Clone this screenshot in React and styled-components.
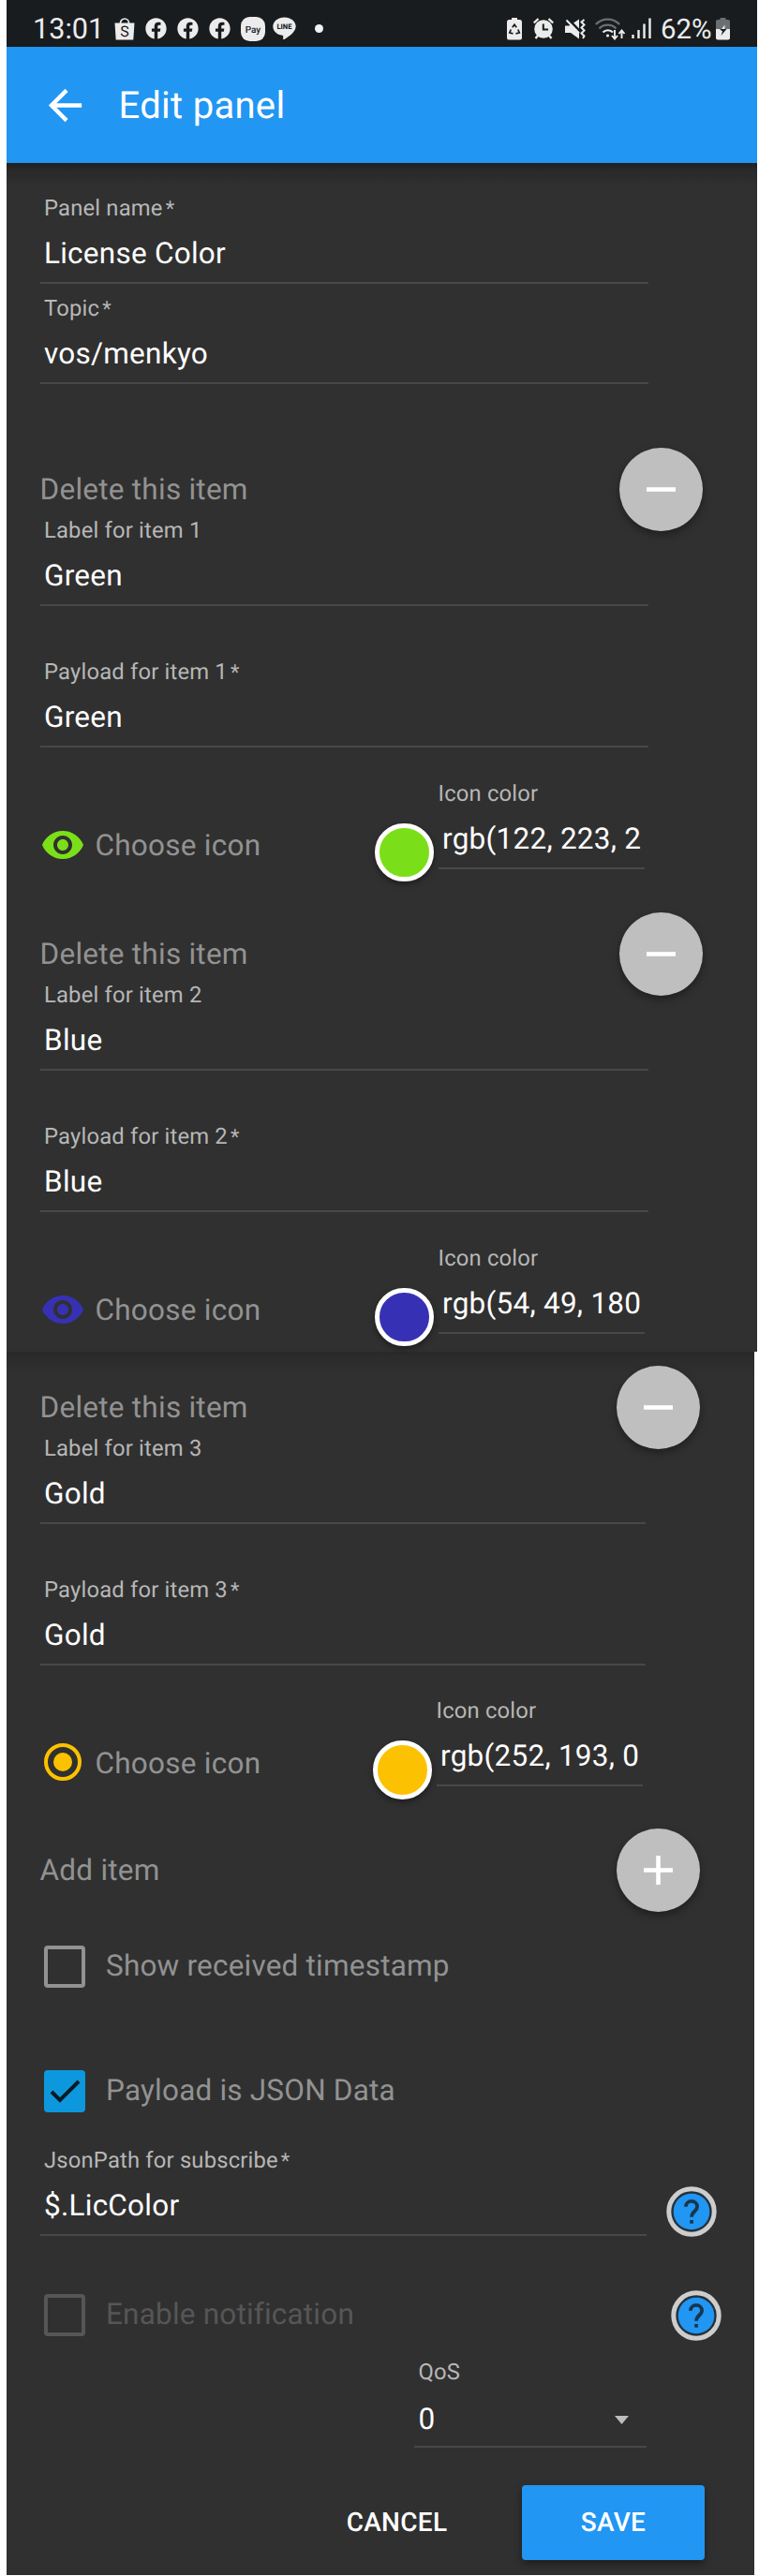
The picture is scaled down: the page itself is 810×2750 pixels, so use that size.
import React from "react";
import styled, { createGlobalStyle } from "styled-components";
import { FaFacebook } from "react-icons/fa";

const GlobalStyle = createGlobalStyle`
  *, *::before, *::after { box-sizing: border-box; }
  html, body { margin: 0; background: #ffffff; }
  body {
    font-family: Roboto, "Liberation Sans", sans-serif;
    font-size: 31.5px;
    letter-spacing: 0.25px;
    text-rendering: geometricPrecision;
    color: #ffffff;
  }
`;

const Screen = styled.div`
  width: 810px;
  height: 2750px;
  padding: 0 2px 0 7px;
  overflow: hidden;
`;

const StatusBar = styled.div`
  display: flex;
  align-items: center;
  justify-content: space-between;
  height: 50px;
  padding: 11px 29px 0 28px;
  background: #181c1f;
  color: #ececec;
  line-height: 36px;
`;

const StatusGroup = styled.div`
  display: flex;
  align-items: center;
  gap: ${(p) => p.$gap}px;
`;

const Clock = styled.span`
  font-size: 30.6px;
  letter-spacing: 0;
  width: 76px;
  padding-top: 2px;
`;

const Percent = styled.span`
  width: 52px;
  margin: 0 -5px 0 -2px;
  padding-top: 2px;
  font-size: 29.4px;
  letter-spacing: 0;
`;

const MoreDot = styled.span`
  width: 9px;
  height: 9px;
  margin-left: 9px;
  border-radius: 50%;
  background: #f2f2f2;
`;

const AppBar = styled.header`
  display: flex;
  align-items: center;
  gap: 30.5px;
  height: 124px;
  padding-left: 36px;
  background: #2196f3;
  font-size: 40px;
  letter-spacing: 0.3px;
`;

const Panel = styled.main`
  height: ${(p) => p.$height}px;
  margin-right: ${(p) => p.$inset}px;
  padding: ${(p) => p.$top}px 0 0 35.5px;
  background: linear-gradient(
      ${(p) => (p.$deep ? "#202020" : "#292929")} 0,
      ${(p) => (p.$deep ? "#292929" : "#2c2c2c")} 8px,
      #303030 24px
    );
`;

const FieldBox = styled.div`
  width: ${(p) => p.$width || "auto"};
  margin: ${(p) => p.$margin || 0};
  border-bottom: 2px solid #484848;
`;

const FieldLabel = styled.div`
  height: 28px;
  padding-left: ${(p) => (p.$flush ? 0 : 4.5)}px;
  font-size: 23.8px;
  letter-spacing: 0.18px;
  line-height: 28px;
  color: #b7b7b7;
  white-space: nowrap;
`;

const Required = styled.span`
  margin-left: 3px;
  font-size: 22px;
`;

const FieldValue = styled.div`
  display: flex;
  align-items: center;
  justify-content: space-between;
  height: 36px;
  margin: ${(p) => (p.$select ? "19px 0 10px" : "17px 0 12px")};
  padding: 0 ${(p) => (p.$select ? 19 : 0)}px 0 4.5px;
  line-height: 36px;
  white-space: nowrap;
`;

const Item = styled.section`
  height: ${(p) => p.$height}px;
`;

const ActionRow = styled.div`
  display: flex;
  align-items: center;
  justify-content: space-between;
  height: 89px;
  padding-right: 58px;
  color: #929292;
`;

const RoundButton = styled.button`
  display: grid;
  place-items: center;
  width: 89px;
  height: 89px;
  padding: 0;
  border: 0;
  border-radius: 50%;
  background: #bfbfbf;
  box-shadow: 0 4px 9px rgba(0, 0, 0, 0.36);
`;

const IconRow = styled.div`
  display: flex;
  align-items: flex-start;
  justify-content: space-between;
  margin-top: 34.7px;
  padding-right: ${(p) => p.$right}px;
`;

const ChooseIcon = styled.div`
  display: flex;
  align-items: center;
  gap: 11px;
  height: 48px;
  margin-top: 45px;
  color: #929292;
`;

const ChooseText = styled.span`
  padding-top: 2px;
`;

const ColorPicker = styled.div`
  display: flex;
  gap: 5px;
`;

const Swatch = styled.span`
  width: 62.5px;
  height: 62.5px;
  margin-top: 46px;
  border: 5px solid #ffffff;
  border-radius: 50%;
  background: ${(p) => p.$color};
  box-shadow: 0 3px 6px rgba(0, 0, 0, 0.4);
`;

const CheckRow = styled.label`
  display: flex;
  align-items: center;
  gap: 22px;
  height: 45px;
  margin-top: ${(p) => p.$gap || 0}px;
  padding-left: 4.5px;
  color: ${(p) => (p.$disabled ? "#565656" : "#929292")};
`;

const Box = styled.span`
  display: grid;
  place-items: center;
  width: 44px;
  height: 45px;
  border: ${(p) => (p.$checked ? "0" : "4px solid currentColor")};
  border-radius: 4px;
  background: ${(p) => (p.$checked ? "#0d98dd" : "transparent")};
`;

const CheckText = styled.span`
  line-height: 36px;
  padding-bottom: 1px;
  letter-spacing: 0.2px;
`;

const HelpFieldRow = styled.div`
  display: flex;
  align-items: flex-end;
  gap: 21.5px;
  margin-top: 37.5px;
`;

const HelpSlot = styled.div`
  height: 53px;
`;

const NotifyRow = styled.div`
  display: flex;
  align-items: center;
  justify-content: space-between;
  height: 54px;
  margin-top: 57.5px;
  padding-right: 35.5px;
`;

const QosRow = styled.div`
  display: flex;
  justify-content: flex-end;
  margin-top: 19.5px;
  padding-right: 115.5px;
`;

const Buttons = styled.div`
  display: flex;
  justify-content: flex-end;
  gap: 26px;
  margin-top: 40px;
  padding-right: 53px;
`;

const Button = styled.button`
  width: ${(p) => p.$width}px;
  height: 80px;
  padding: 0 0 2px;
  border: 0;
  border-radius: 4px;
  background: ${(p) => (p.$primary ? "#2196f3" : "transparent")};
  box-shadow: ${(p) => (p.$primary ? "0 4px 9px rgba(0,0,0,.4)" : "none")};
  color: #ffffff;
  font: 500 28px Roboto, sans-serif;
  letter-spacing: 0.01em;
  text-rendering: inherit;
`;

const Svg = styled.svg`
  display: block;
  flex: none;
  overflow: visible;
  margin-left: ${(p) => p.$pull || 0}px;
`;

const BagIcon = () => (
  <Svg width="22" height="24" viewBox="0 0 22 24">
    <path d="M6.5 7V5.5a4.5 4.5 0 0 1 9 0V7" fill="none" stroke="#ececec" strokeWidth="1.7" />
    <path d="M0.5 5.5h21l-1.2 18h-18.6z" fill="#ececec" />
    <text x="11" y="20" textAnchor="middle" fontSize="16" letterSpacing="0" fill="#181c1f">S</text>
  </Svg>
);

const PayIcon = () => (
  <Svg width="26" height="26" viewBox="0 0 26 26">
    <rect width="26" height="26" rx="9.5" fill="#ececec" />
    <text x="13" y="16.5" textAnchor="middle" fontSize="10" fontWeight="500" letterSpacing="0" fill="#181c1f">Pay</text>
  </Svg>
);

const LineIcon = () => (
  <Svg width="25" height="25" viewBox="0 0 25 25" $pull={-3}>
    <path d="M12.5 0.5C5.8 0.5.3 4.8.3 10.2c0 4.8 4.2 8.7 9.9 9.6 1.4.3 1.2.9.9 3.4-.1.8.3 1.2 1.2.7 3-1.6 12.4-7.3 12.4-13.7C24.7 4.8 19.2.5 12.5.5z" fill="#ececec" />
    <text x="12.5" y="13" textAnchor="middle" fontSize="7.6" fontWeight="800" letterSpacing="0" fill="#181c1f">LINE</text>
  </Svg>
);

const RecycleBatteryIcon = () => (
  <Svg width="16" height="24" viewBox="0 0 16 24">
    <path d="M5 0h6v2h2.5A2.5 2.5 0 0 1 16 4.5v17a2 2 0 0 1-2 2H2a2 2 0 0 1-2-2v-17A2.5 2.5 0 0 1 2.5 2H5z" fill="#ececec" />
    <path d="M5.8 10.2L8 7.2l2.2 3M11.8 12.5l1.5 3.5-3.8.8M6.5 16.8l-3.7-.8 1.5-3.5" fill="none" stroke="#181c1f" strokeWidth="1.7" />
  </Svg>
);

const AlarmIcon = () => (
  <Svg width="22" height="23" viewBox="0 0 22 23">
    <path d="M0.8 5.5L5.5 1M21.2 5.5L16.5 1M5 19l-2.5 3M17 19l2.5 3" stroke="#ececec" strokeWidth="2.4" fill="none" />
    <circle cx="11" cy="12" r="9.8" fill="#ececec" />
    <path d="M10.8 6.5V12.5H16" stroke="#181c1f" strokeWidth="2" fill="none" />
  </Svg>
);

const MuteIcon = () => (
  <Svg width="22" height="22" viewBox="0 0 22 22">
    <path d="M0 7.5h4.5L15 .5v21L6 15H0z" fill="#ececec" />
    <path d="M3 0L17 14.5" stroke="#181c1f" strokeWidth="2.6" />
    <path d="M1.5 1.5L15 15.500" stroke="#ececec" strokeWidth="2" />
    <path d="M20.5 1l-3 2.5 3 3-3 3 3 3-3 3 3 3-1.5 2.5" stroke="#ececec" strokeWidth="2" fill="none" />
  </Svg>
);

const WifiIcon = () => (
  <Svg width="32" height="24" viewBox="0 0 32 24" fill="none" strokeWidth="2.2" $pull={-2}>
    <path d="M0.8 7a17.5 17.5 0 0 1 25.4 0" stroke="#6c6f71" />
    <path d="M4.5 11.5a12.5 12.5 0 0 1 18 0" stroke="#6c6f71" />
    <path d="M8.5 15.5a7.2 7.2 0 0 1 10.5 0" stroke="#ececec" />
    <circle cx="13.5" cy="19" r="1.6" fill="#ececec" />
    <path d="M21 13v9M18 19l3 3.5 3-3.5M28.5 22v-8M25.5 17l3-3.5 3 3.5" stroke="#ececec" strokeWidth="1.9" />
  </Svg>
);

const SignalIcon = () => (
  <Svg width="21" height="23" viewBox="0 0 21 23" stroke="#ececec" strokeWidth="2.4" $pull={-5}>
    <path d="M1.5 18v4M7.5 13v9M13.5 6.5V22M19.5.5V22" />
  </Svg>
);

const BatteryIcon = () => (
  <Svg width="15" height="24" viewBox="0 0 15 24">
    <path d="M4.5 0h6v2H13a2 2 0 0 1 2 2v8H0V4a2 2 0 0 1 2-2h2.5z" fill="#6c6f71" />
    <path d="M0 12h15v9.5a2 2 0 0 1-2 2H2a2 2 0 0 1-2-2z" fill="#ececec" />
    <path d="M9.5 7.5V12H6z" fill="#ececec" />
    <path d="M4 12h7.5l-6 7L7 14.5z" fill="#181c1f" />
  </Svg>
);

const BackArrow = () => (
  <Svg width="53" height="53" viewBox="0 0 24 24" fill="#ffffff">
    <path d="M20 11H7.83l5.59-5.59L12 4l-8 8 8 8 1.41-1.41L7.83 13H20v-2z" />
  </Svg>
);

const EyeIcon = ({ color }) => (
  <Svg width="48" height="48" viewBox="0 0 24 24">
    <circle cx="12" cy="12" r="5.2" fill="#303030" />
    <path
      fill={color}
      d="M12 4.5C7 4.5 2.73 7.61 1 12c1.73 4.39 6 7.5 11 7.5s9.27-3.11 11-7.5c-1.73-4.39-6-7.5-11-7.5zM12 17c-2.76 0-5-2.24-5-5s2.24-5 5-5 5 2.24 5 5-2.24 5-5 5zm0-8c-1.66 0-3 1.34-3 3s1.34 3 3 3 3-1.34 3-3-1.34-3-3-3z"
    />
  </Svg>
);

const RadioIcon = ({ color }) => (
  <Svg width="48" height="48" viewBox="0 0 24 24">
    <circle cx="12" cy="12" r="9" fill="none" stroke={color} strokeWidth="2" />
    <circle cx="12" cy="12" r="5" fill={color} />
  </Svg>
);

const HelpIcon = () => (
  <Svg width="54" height="54" viewBox="0 0 54 54">
    <circle cx="27" cy="27" r="24.2" fill="#25313a" stroke="#cdcdcd" strokeWidth="5" />
    <circle cx="27" cy="27" r="19.3" fill="#2196f3" />
    <path d="M20.9 21.8a6.1 5.9 0 0 1 12.2 0c0 4.6-6 5-6 11" fill="none" stroke="#17364e" strokeWidth="3.8" />
    <path d="M25.2 36h3.7v3.7h-3.7z" fill="#17364e" />
  </Svg>
);

const Sign = ({ plus }) => (
  <Svg width="31" height="31" viewBox="0 0 31 31" fill="#ffffff">
    <path d="M0 13.2h31v4.6H0z" />
    {plus && <path d="M13.2 0h4.6v31h-4.6z" />}
  </Svg>
);

const Field = ({ label, value, required, flush, ...box }) => (
  <FieldBox {...box}>
    <FieldLabel $flush={flush}>
      {label}
      {required && <Required>*</Required>}
    </FieldLabel>
    <FieldValue>{value}</FieldValue>
  </FieldBox>
);

const MAIN = "calc(100% - 116px)";

const PanelItem = ({ n, name, color, rgb, radio, height = 496, right = 120 }) => (
  <Item $height={height}>
    <ActionRow>
      Delete this item
      <RoundButton aria-label="Delete">
        <Sign />
      </RoundButton>
    </ActionRow>
    <Field label={`Label for item ${n}`} value={name} $width={MAIN} $margin="-15px 0 0" />
    <Field label={`Payload for item ${n}`} required value={name} $width={MAIN} $margin="56px 0 0" />
    <IconRow $right={right}>
      <ChooseIcon>
        {radio ? <RadioIcon color={color} /> : <EyeIcon color={color} />}
        <ChooseText>Choose icon</ChooseText>
      </ChooseIcon>
      <ColorPicker>
        <Swatch $color={color} />
        <Field label="Icon color" value={rgb} flush $width="220.5px" $margin="0 0 13.5px" />
      </ColorPicker>
    </IconRow>
  </Item>
);

export default function App() {
  return (
    <Screen>
      <GlobalStyle />
      <StatusBar>
        <StatusGroup $gap={11}>
          <Clock>13:01</Clock>
          <BagIcon />
          <FaFacebook size={23} />
          <FaFacebook size={23} />
          <FaFacebook size={23} />
          <PayIcon />
          <LineIcon />
          <MoreDot />
        </StatusGroup>
        <StatusGroup $gap={12}>
          <RecycleBatteryIcon />
          <AlarmIcon />
          <MuteIcon />
          <WifiIcon />
          <SignalIcon />
          <Percent>62%</Percent>
          <BatteryIcon />
        </StatusGroup>
      </StatusBar>
      <AppBar>
        <BackArrow />
        Edit panel
      </AppBar>
      <Panel $height={1269} $inset={0} $top={34} $deep>
        <Field label="Panel name" required value="License Color" $width={MAIN} />
        <Field label="Topic" required value="vos/menkyo" $width={MAIN} $margin="12px 0 68.3px" />
        <PanelItem n={1} name="Green" color="rgb(122, 223, 24)" rgb="rgb(122, 223, 2" />
        <PanelItem n={2} name="Blue" color="rgb(54, 49, 180)" rgb="rgb(54, 49, 180" height={468} />
      </Panel>
      <Panel $height={1306} $inset={3} $top={14.7}>
        <PanelItem n={3} name="Gold" color="rgb(252, 193, 0)" rgb="rgb(252, 193, 0" radio height={494.6} right={119} />
        <ActionRow>
          Add item
          <RoundButton aria-label="Add">
            <Sign plus />
          </RoundButton>
        </ActionRow>
        <CheckRow $gap={35.7}>
          <Box />
          <CheckText>Show received timestamp</CheckText>
        </CheckRow>
        <CheckRow $gap={88}>
          <Box $checked>
            <Svg width="33" height="25" viewBox="0 0 33 25">
              <path d="M2 13l9 9L31 2" fill="none" stroke="#0b1a24" strokeWidth="4" />
            </Svg>
          </Box>
          <CheckText>Payload is JSON Data</CheckText>
        </CheckRow>
        <HelpFieldRow>
          <Field label="JsonPath for subscribe" required value="$.LicColor" $width="647px" />
          <HelpSlot>
            <HelpIcon />
          </HelpSlot>
        </HelpFieldRow>
        <NotifyRow>
          <CheckRow $disabled>
            <Box />
            <CheckText>Enable notification</CheckText>
          </CheckRow>
          <HelpIcon />
        </NotifyRow>
        <QosRow>
          <FieldBox $width="247.5px">
            <FieldLabel>QoS</FieldLabel>
            <FieldValue $select>
              0
              <Svg width="15" height="9" viewBox="0 0 15 9">
                <path d="M0 0h15L7.5 9z" fill="#bdbdbd" />
              </Svg>
            </FieldValue>
          </FieldBox>
        </QosRow>
        <Buttons>
          <Button $width={215}>CANCEL</Button>
          <Button $width={195} $primary>
            SAVE
          </Button>
        </Buttons>
      </Panel>
    </Screen>
  );
}
